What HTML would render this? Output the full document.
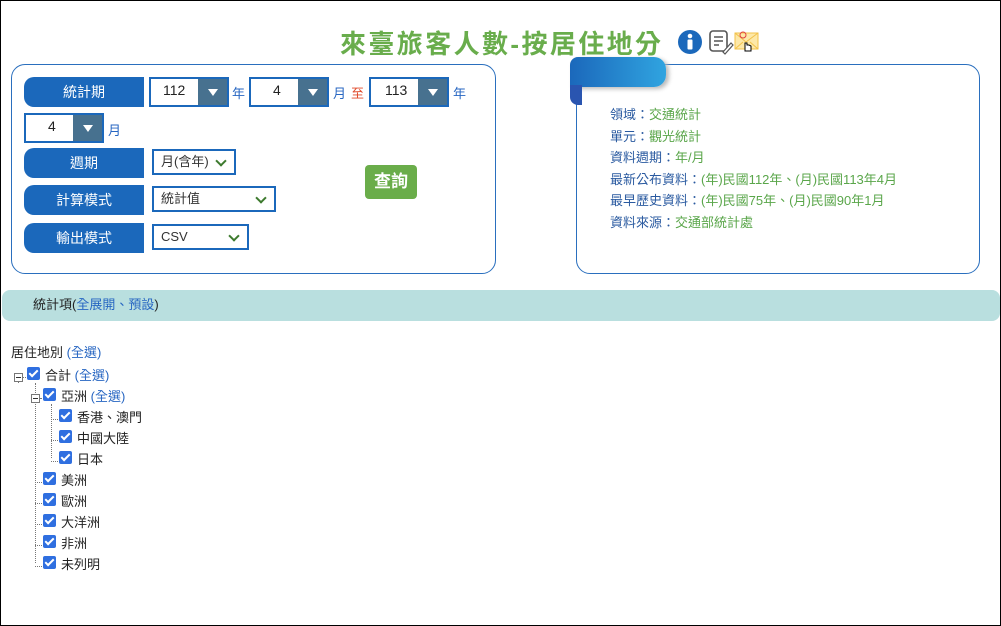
<!DOCTYPE html>
<html><head><meta charset="utf-8"><style>
*{box-sizing:border-box;margin:0;padding:0}
body{width:1001px;height:626px;position:relative;background:#fff;font-family:"Liberation Sans","Noto Sans CJK TC",sans-serif;font-size:13px;color:#222;overflow:hidden}
.frame{position:absolute;left:0;top:0;width:1001px;height:626px;border:1px solid #000}
.a{position:absolute;white-space:nowrap}
.title{left:340px;top:24px;font-size:26px;font-weight:bold;color:#69ad4c;letter-spacing:2.4px}
.panel{position:absolute;border:1px solid #2a6fbe;border-radius:14px}
.lab{position:absolute;left:24px;width:120px;height:30px;background:#1b68bb;color:#fff;border-radius:10px 0 0 10px;text-align:center;line-height:30px;font-size:14px}
.sel{position:absolute;height:30px;border:2px solid #1b68bb;background:#fff;font-size:14px;line-height:23px}
.sel .arr{position:absolute;right:0;top:0;width:29px;height:100%;background:#47718f}
.sel .arr:after{content:"";position:absolute;left:10px;top:10px;border-left:5px solid transparent;border-right:5px solid transparent;border-top:7px solid #fff}
.dd{position:absolute;height:26px;border:2px solid #1b68bb;background:#fff;font-size:13px;line-height:22px;padding-left:7px;color:#333}
.dd:after{content:"";position:absolute;right:9px;top:6px;width:6px;height:6px;border-right:2px solid #3d7a2e;border-bottom:2px solid #3d7a2e;transform:rotate(45deg)}
.blue{color:#2766c2}
.info{left:610px;font-size:13px;color:#2a5aa0}
.info span{color:#5aa64a}
.cb{position:absolute;width:13px;height:13px;background:#2f6fe0;border-radius:2px}
.cb:after{content:"";position:absolute;left:4px;top:1px;width:3px;height:7px;border-right:2px solid #fff;border-bottom:2px solid #fff;transform:rotate(45deg)}
.t{position:absolute;font-size:13px;color:#222}
.vl{position:absolute;border-left:1px dotted #777}
.hl{position:absolute;border-top:1px dotted #777;height:0}
.pm{position:absolute;width:9px;height:9px;border:1px solid #777;background:#fff}
.pm:after{content:"";position:absolute;left:1px;top:3px;width:5px;border-top:1px solid #333}
</style></head><body>
<div class="frame"></div>
<div class="a title">來臺旅客人數-按居住地分</div>
<svg class="a" style="left:677px;top:29px" width="26" height="26"><circle cx="13" cy="13" r="12" fill="#1b68bb"/><circle cx="13" cy="7" r="2.3" fill="#fff"/><rect x="10.5" y="10.5" width="5" height="10" rx="1" fill="#fff"/></svg>
<svg class="a" style="left:708px;top:29px" width="26" height="26"><rect x="2" y="2" width="17" height="20" rx="3" fill="#fff" stroke="#555" stroke-width="1.6"/><path d="M6 8h9M6 12h9M6 16h5" stroke="#555" stroke-width="1.6"/><path d="M15 23l8-9 2 2-8 9z" fill="#fff" stroke="#555" stroke-width="1.2"/></svg>
<svg class="a" style="left:734px;top:30px" width="26" height="26"><rect x="1" y="3" width="23" height="16" fill="#fde8a8" stroke="#f2c24a"/><path d="M1 3l11 9 12-9M1 19l8-7M24 19l-8-7" stroke="#f2c24a" fill="none"/><circle cx="9" cy="5" r="3" fill="none" stroke="#e04040"/><path d="M11 13v8h6v-5l-2-1-2 0v-2z" fill="#fff" stroke="#000" stroke-width="1"/></svg>

<div class="panel" style="left:11px;top:64px;width:485px;height:210px"></div>
<div class="lab" style="top:77px">統計期</div>
<div class="sel" style="left:149px;top:77px;width:80px"><span style="margin-left:12px">112</span><div class="arr"></div></div>
<div class="a blue" style="left:232px;top:83px;font-size:13px">年</div>
<div class="sel" style="left:249px;top:77px;width:80px"><span style="margin-left:22px">4</span><div class="arr"></div></div>
<div class="a blue" style="left:333px;top:83px">月</div><div class="a" style="left:351px;top:83px;color:#e04a2a">至</div>
<div class="sel" style="left:369px;top:77px;width:80px"><span style="margin-left:14px">113</span><div class="arr"></div></div>
<div class="a blue" style="left:453px;top:83px">年</div>
<div class="sel" style="left:24px;top:113px;width:80px"><span style="margin-left:22px">4</span><div class="arr"></div></div>
<div class="a blue" style="left:108px;top:120px">月</div>
<div class="lab" style="top:148px">週期</div>
<div class="dd" style="left:152px;top:149px;width:84px">月(含年)</div>
<div class="lab" style="top:185px">計算模式</div>
<div class="dd" style="left:152px;top:186px;width:124px">統計值</div>
<div class="lab" style="top:223px">輸出模式</div>
<div class="dd" style="left:152px;top:224px;width:97px">CSV</div>
<div class="a" style="left:365px;top:165px;width:52px;height:34px;background:#6aad4a;border-radius:4px;color:#fff;font-weight:bold;font-size:17px;text-align:center;line-height:34px">查詢</div>

<div class="panel" style="left:576px;top:64px;width:404px;height:210px"></div>
<div class="a" style="left:570px;top:57px;width:96px;height:30px;background:linear-gradient(90deg,#1b68bb,#30a4e0);border-radius:8px 12px 12px 0;box-shadow:3px 2px 4px #bbb"></div>
<div class="a" style="left:570px;top:85px;width:12px;height:20px;background:#2a55b0;border-radius:0 0 0 8px"></div>
<div class="a info" style="top:104px">領域：<span>交通統計</span></div>
<div class="a info" style="top:126px">單元：<span>觀光統計</span></div>
<div class="a info" style="top:147px">資料週期：<span>年/月</span></div>
<div class="a info" style="top:169px">最新公布資料：<span>(年)民國112年、(月)民國113年4月</span></div>
<div class="a info" style="top:190px">最早歷史資料：<span>(年)民國75年、(月)民國90年1月</span></div>
<div class="a info" style="top:212px">資料來源：<span>交通部統計處</span></div>

<div class="a" style="left:2px;top:290px;width:998px;height:31px;background:#b9dfdf;border-radius:8px"></div>
<div class="a" style="left:33px;top:294px">統計項(<span class="blue">全展開、預設</span>)</div>

<div class="a" style="left:11px;top:342px">居住地別 <span class="blue">(全選)</span></div>
<div class="vl" style="left:18px;top:379px;height:4px"></div>
<div class="pm" style="left:14px;top:373px"></div>
<div class="hl" style="left:23px;top:377px;width:5px"></div>
<div class="cb" style="left:27px;top:367px"></div><div class="t" style="left:45px;top:365px">合計 <span class="blue">(全選)</span></div>
<div class="vl" style="left:35px;top:383px;height:180px"></div>
<div class="pm" style="left:31px;top:394px"></div>
<div class="hl" style="left:40px;top:398px;width:4px"></div>
<div class="cb" style="left:43px;top:388px"></div><div class="t" style="left:61px;top:386px">亞洲 <span class="blue">(全選)</span></div>
<div class="vl" style="left:51px;top:404px;height:54px"></div>
<div class="hl" style="left:51px;top:419px;width:9px"></div><div class="cb" style="left:59px;top:409px"></div><div class="t" style="left:77px;top:407px">香港、澳門</div>
<div class="hl" style="left:51px;top:440px;width:9px"></div><div class="cb" style="left:59px;top:430px"></div><div class="t" style="left:77px;top:428px">中國大陸</div>
<div class="hl" style="left:51px;top:461px;width:9px"></div><div class="cb" style="left:59px;top:451px"></div><div class="t" style="left:77px;top:449px">日本</div>
<div class="hl" style="left:35px;top:482px;width:9px"></div><div class="cb" style="left:43px;top:472px"></div><div class="t" style="left:61px;top:470px">美洲</div>
<div class="hl" style="left:35px;top:503px;width:9px"></div><div class="cb" style="left:43px;top:493px"></div><div class="t" style="left:61px;top:491px">歐洲</div>
<div class="hl" style="left:35px;top:524px;width:9px"></div><div class="cb" style="left:43px;top:514px"></div><div class="t" style="left:61px;top:512px">大洋洲</div>
<div class="hl" style="left:35px;top:545px;width:9px"></div><div class="cb" style="left:43px;top:535px"></div><div class="t" style="left:61px;top:533px">非洲</div>
<div class="hl" style="left:35px;top:566px;width:9px"></div><div class="cb" style="left:43px;top:556px"></div><div class="t" style="left:61px;top:554px">未列明</div>
</body></html>
